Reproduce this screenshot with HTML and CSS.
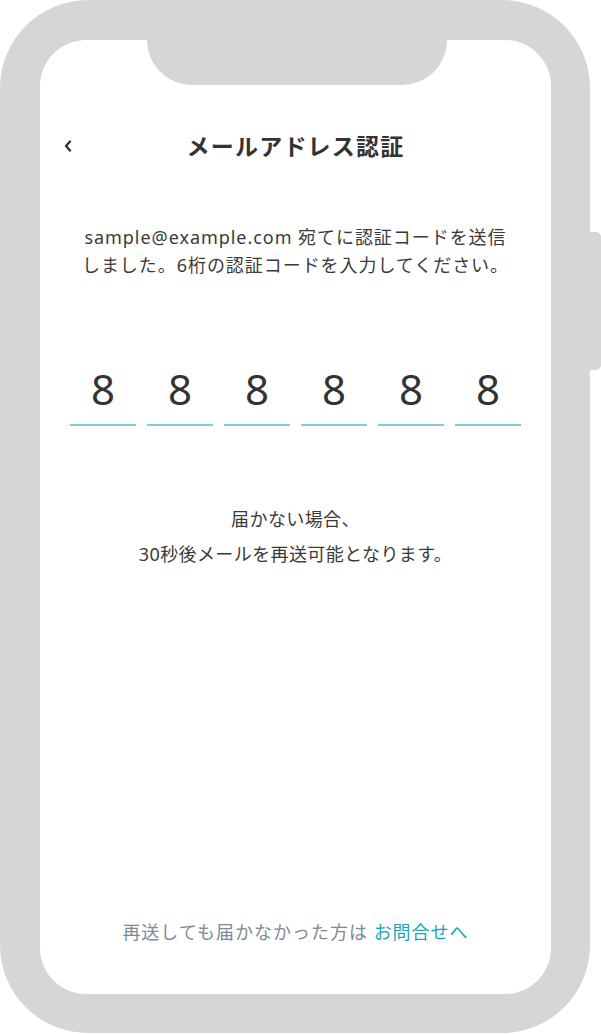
FILE: index.html
```html
<!DOCTYPE html>
<html lang="ja">
<head>
<meta charset="utf-8">
<title>メールアドレス認証</title>
<link rel="stylesheet" href="styles.css">
</head>
<body>
<div class="device">
  <div class="phone">
    <div class="screen">
      <div class="notch"></div>
      <header class="header">
        <div class="back">
          <svg width="10" height="14" viewBox="0 0 10 14"><polyline points="7,2.5 3,7 7,11.5" fill="none" stroke="#333" stroke-width="2.4" stroke-linecap="round" stroke-linejoin="round"/></svg>
        </div>
        <h1 class="title">メールアドレス認証</h1>
        <div></div>
      </header>
      <p class="desc">sample@example.com 宛てに認証コードを送信<br>しました。6桁の認証コードを入力してください。</p>
      <div class="code">
        <div class="cell">8</div>
        <div class="cell">8</div>
        <div class="cell">8</div>
        <div class="cell">8</div>
        <div class="cell">8</div>
        <div class="cell">8</div>
      </div>
      <p class="note">届かない場合、<br>30秒後メールを再送可能となります。</p>
      <p class="footer">再送しても届かなかった方は <a class="link" href="#">お問合せへ</a></p>
    </div>
  </div>
  <div class="side-button"></div>
</div>
</body>
</html>
```
FILE: styles.css
```css
* { box-sizing: border-box; }
html, body { margin: 0; padding: 0; background: #fff; }
body {
  font-family: "Noto Sans", "Noto Sans CJK JP", sans-serif;
  color: #333;
}
.device {
  display: flex;
  align-items: flex-start;
  width: 601px;
  height: 1034px;
}
.phone {
  width: 590px;
  height: 1033px;
  background: #d6d6d6;
  border-radius: 88px;
  padding: 40px 39px 39px 40px;
}
.side-button {
  width: 11px;
  height: 138px;
  margin-top: 232px;
  background: #d6d6d6;
  border-radius: 0 5px 5px 0;
}
.screen {
  height: 954px;
  background: #fff;
  border-radius: 46px;
  display: flex;
  flex-direction: column;
  align-items: center;
  overflow: hidden;
}
.notch {
  width: 300px;
  height: 45px;
  flex: none;
  background: #d6d6d6;
  border-radius: 0 0 48px 48px;
  margin-left: 3px;
}
.header {
  width: 100%;
  margin-top: 41px;
  height: 40px;
  display: grid;
  grid-template-columns: 1fr auto 1fr;
  align-items: center;
}
.back {
  padding-left: 23px;
  display: flex;
  align-items: center;
}
.back svg { display: block; }
.title {
  margin: 0;
  font-size: 23px;
  font-weight: 700;
  letter-spacing: 1.2px;
  line-height: 40px;
  color: #333;
}
.desc {
  margin: 57px 0 0;
  font-size: 18px;
  line-height: 28px;
  letter-spacing: 0.95px;
  text-align: center;
  color: #3a3a3a;
}
.code {
  margin-top: 85px;
  display: flex;
  gap: 11px;
}
.cell {
  width: 66px;
  font-size: 42px;
  line-height: 50px;
  text-align: center;
  color: #333;
  padding-bottom: 10px;
  border-bottom: 2px solid #7fcfd8;
}
.note {
  margin: 76px 0 0;
  font-size: 18px;
  line-height: 35px;
  letter-spacing: 0.4px;
  text-align: center;
  color: #3a3a3a;
}
.footer {
  margin: auto 0 48px;
  font-size: 18px;
  line-height: 28px;
  letter-spacing: 1px;
  color: #7d8b96;
}
.link {
  color: #1ba6b6;
  text-decoration: none;
}
```
